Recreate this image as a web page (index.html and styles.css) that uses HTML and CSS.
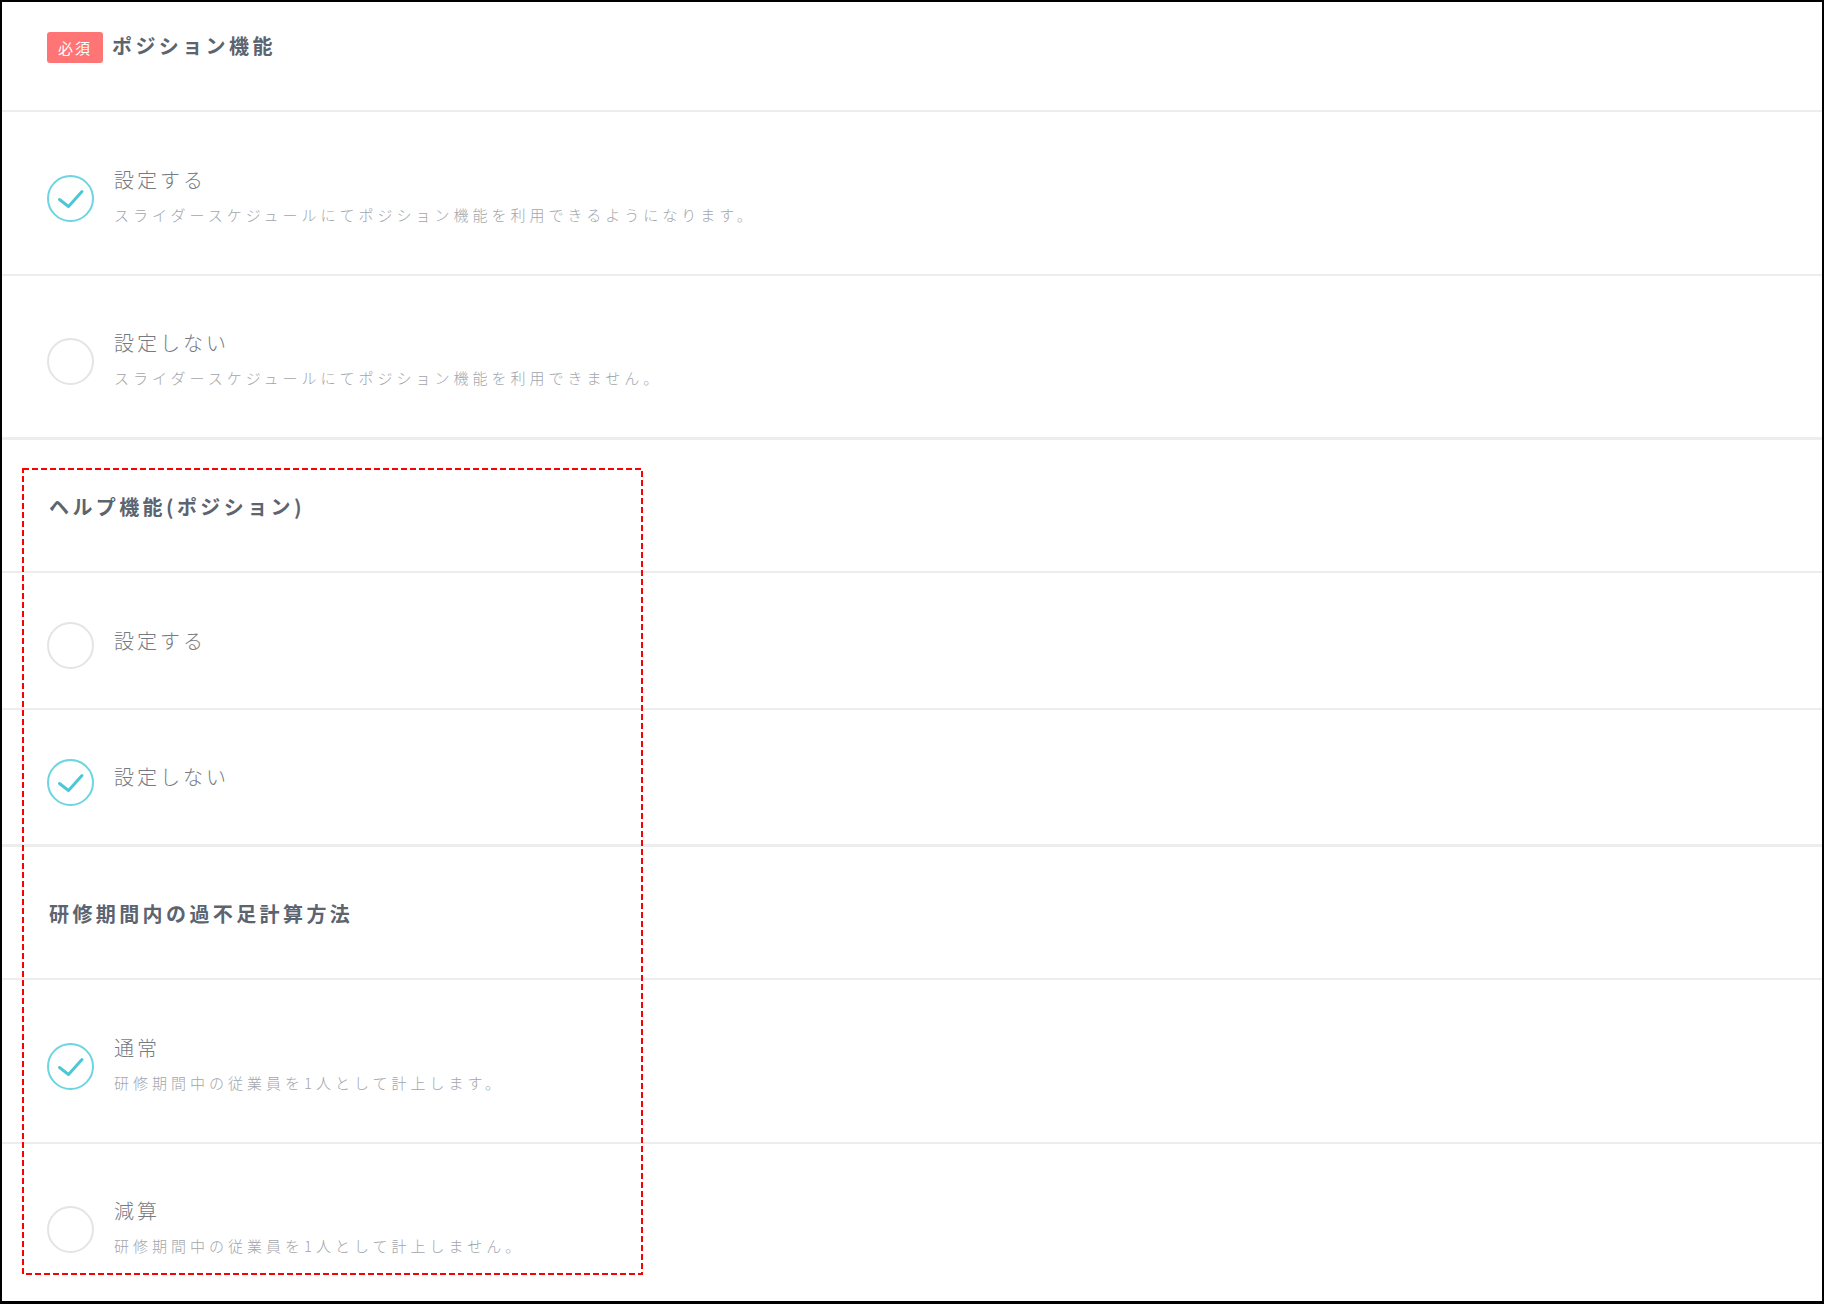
FILE: index.html
```html
<!DOCTYPE html>
<html lang="ja">
<head>
  <meta charset="UTF-8" />
  <meta name="viewport" content="width=device-width, initial-scale=1.0"/>
  <title>ポジション機能</title>
  <link rel="stylesheet" href="styles.css">
</head>
<body>
  <div class="frame">
    <div class="page-head">
      <span class="badge">必須</span>
      <h2>ポジション機能</h2>
    </div>

    <ul class="options">
      <li class="option has-desc">
        <span class="radio checked">
          <svg viewBox="0 0 43 43" width="43" height="43"><polyline points="10.5,22.5 19.5,29.5 33,14.5" /></svg>
        </span>
        <div class="label">
          <p class="title">設定する</p>
          <p class="desc">スライダースケジュールにてポジション機能を利用できるようになります。</p>
        </div>
      </li>
      <li class="option has-desc">
        <span class="radio"></span>
        <div class="label">
          <p class="title">設定しない</p>
          <p class="desc">スライダースケジュールにてポジション機能を利用できません。</p>
        </div>
      </li>
    </ul>

    <h3 class="group-head">ヘルプ機能(ポジション)</h3>
    <ul class="options">
      <li class="option">
        <span class="radio"></span>
        <div class="label single">
          <p class="title">設定する</p>
        </div>
      </li>
      <li class="option">
        <span class="radio checked">
          <svg viewBox="0 0 43 43" width="43" height="43"><polyline points="10.5,22.5 19.5,29.5 33,14.5" /></svg>
        </span>
        <div class="label single">
          <p class="title">設定しない</p>
        </div>
      </li>
    </ul>

    <h3 class="group-head">研修期間内の過不足計算方法</h3>
    <ul class="options">
      <li class="option has-desc">
        <span class="radio checked">
          <svg viewBox="0 0 43 43" width="43" height="43"><polyline points="10.5,22.5 19.5,29.5 33,14.5" /></svg>
        </span>
        <div class="label">
          <p class="title">通常</p>
          <p class="desc">研修期間中の従業員を1人として計上します。</p>
        </div>
      </li>
      <li class="option has-desc">
        <span class="radio"></span>
        <div class="label">
          <p class="title">減算</p>
          <p class="desc">研修期間中の従業員を1人として計上しません。</p>
        </div>
      </li>
    </ul>

    <div class="annotation">
      <svg width="100%" height="100%"><rect x="1" y="1" width="619" height="805" /></svg>
    </div>
  </div>
</body>
</html>
```

FILE: styles.css
```css
* {
  box-sizing: border-box;
  margin: 0;
  padding: 0;
}

body {
  font-family: "Noto Sans CJK JP", "Noto Sans", sans-serif;
  background: #fff;
}

.frame {
  position: relative;
  width: 1824px;
  height: 1304px;
  border: 2px solid #000;
  border-bottom-width: 3px;
  overflow: hidden;
}

.page-head {
  display: flex;
  align-items: flex-start;
  gap: 9px;
  height: 110px;
  padding: 30px 0 0 45px;
  border-bottom: 2px solid #ededed;
}

.badge {
  display: flex;
  align-items: center;
  justify-content: center;
  width: 56px;
  height: 31px;
  background: #ff7474;
  color: #fff;
  font-size: 15px;
  letter-spacing: 2px;
  border-radius: 3px;
}

.page-head h2,
.group-head {
  font-size: 20px;
  font-weight: 700;
  letter-spacing: 3.4px;
  color: #5c6470;
}

.page-head h2 {
  line-height: 28px;
}

.group-head {
  display: flex;
  align-items: center;
  height: 133px;
  padding: 3px 0 0 47px;
  line-height: 28px;
  border-bottom: 2px solid #ededed;
}

.options {
  list-style: none;
}

.option {
  display: flex;
  align-items: center;
  gap: 20px;
  height: 137px;
  padding: 10px 0 0 45px;
  border-bottom: 2px solid #ededed;
}

.option.has-desc {
  height: 164px;
}

.option:last-child {
  border-bottom-width: 3px;
}

.radio {
  flex: none;
  width: 47px;
  height: 47px;
  border: 2px solid #e3e4e6;
  border-radius: 50%;
}

.radio.checked {
  border-color: #6dd4e2;
}

.radio svg {
  display: block;
  fill: none;
  stroke: #4cc7d8;
  stroke-width: 3;
  stroke-linecap: round;
  stroke-linejoin: round;
}

.label {
  padding-bottom: 5px;
}

.label.single {
  padding-bottom: 10px;
}

.title {
  font-size: 20px;
  font-weight: 300;
  line-height: 28px;
  letter-spacing: 3px;
  color: #767b83;
}

.desc {
  margin-top: 10px;
  font-size: 15px;
  font-weight: 300;
  line-height: 22px;
  letter-spacing: 4px;
  color: #a2a5ab;
}

.annotation {
  position: absolute;
  left: 20px;
  top: 466px;
  width: 621px;
  height: 807px;
}

.annotation svg {
  display: block;
}

.annotation rect {
  fill: none;
  stroke: #f00;
  stroke-width: 2;
  stroke-dasharray: 6 3;
}
```
